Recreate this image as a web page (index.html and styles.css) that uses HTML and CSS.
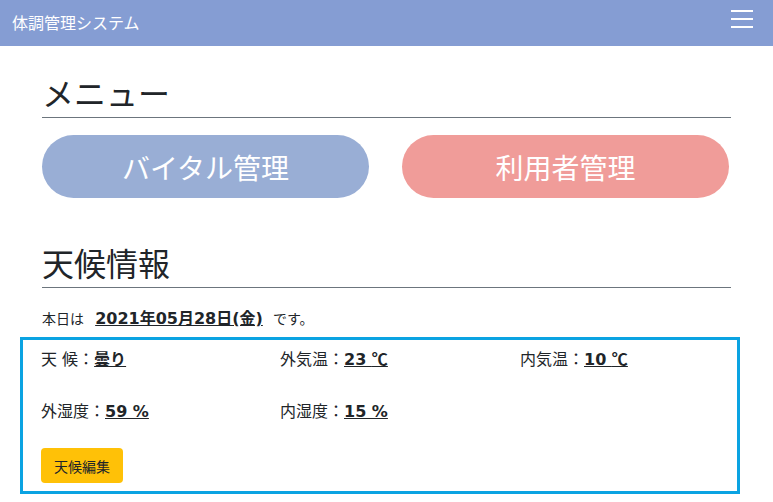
FILE: index.html
```html
<!DOCTYPE html>
<html lang="ja">
<head>
<meta charset="utf-8">
<title>体調管理システム</title>
<link rel="stylesheet" href="styles.css">
</head>
<body>
<header class="topbar">
  <div class="brand">体調管理システム</div>
  <div class="burger" aria-label="menu"><span></span><span></span><span></span></div>
</header>
<main class="page">
  <h2 class="section-title">メニュー</h2>
  <div class="menu-buttons">
    <a class="pill pill-vital">バイタル管理</a>
    <a class="pill pill-user">利用者管理</a>
  </div>
  <h2 class="section-title second">天候情報</h2>
  <p class="today">本日は <span class="date">2021年05月28日(金)</span> です。</p>
</main>
<section class="weather">
  <div class="grid">
    <div class="item">天 候：<span class="val">曇り</span></div>
    <div class="item">外気温：<span class="val">23 <span class="unit">℃</span></span></div>
    <div class="item">内気温：<span class="val">10 <span class="unit">℃</span></span></div>
    <div class="item">外湿度：<span class="val">59 %</span></div>
    <div class="item">内湿度：<span class="val">15 %</span></div>
  </div>
  <button class="edit">天候編集</button>
</section>
</body>
</html>
```
FILE: styles.css
```css
* { box-sizing: border-box; }
html, body { margin: 0; padding: 0; background: #fff; }
body {
  font-family: "DejaVu Sans", "Noto Sans CJK JP", sans-serif;
  color: #212529;
  width: 773px;
}
.topbar {
  height: 46px;
  background: #859dd3;
  display: flex;
  justify-content: space-between;
  align-items: center;
  padding: 0 20px 0 12px;
}
.brand {
  font-family: "Noto Sans CJK JP", sans-serif;
  font-size: 16px;
  color: #fff;
  line-height: 20px;
  margin-top: -2px;
}
.burger {
  width: 22px;
  display: flex;
  flex-direction: column;
  gap: 6px;
  align-self: flex-start;
  margin-top: 10px;
}
.burger span { display: block; height: 2px; background: #fff; }
.page { padding: 0 42px; }
.section-title {
  font-family: "Noto Sans CJK JP", sans-serif;
  font-weight: 400;
  font-size: 32px;
  line-height: 38px;
  margin: 27px 0 0;
  padding-bottom: 6px;
  border-bottom: 1px solid #6c757d;
}
.section-title.second { margin-top: 45px; }
.menu-buttons {
  display: flex;
  gap: 33px;
  margin-top: 17px;
}
.pill {
  width: 327px;
  height: 63px;
  border-radius: 32px;
  display: flex;
  align-items: center;
  justify-content: center;
  color: #fff;
  font-family: "Noto Sans CJK JP", sans-serif;
  font-size: 28px;
}
.pill-vital { background: #99aed5; }
.pill-user { background: #f09c99; }
.today {
  margin: 18px 0 0;
  height: 24px;
  font-size: 14px;
  line-height: 24px;
  font-family: "Noto Sans CJK JP", sans-serif;
}
.today .date {
  font-family: "DejaVu Sans", "Noto Sans CJK JP", sans-serif;
  font-size: 16px;
  line-height: 1;
  font-weight: 700;
  text-decoration: underline;
  margin: 0 7px 0 8px;
}
.weather {
  margin: 7px 0 0 20px;
  width: 720px;
  border: 3px solid #0aa3e2;
  padding: 8px 18px 8px;
}
.grid {
  display: grid;
  grid-template-columns: 239px 240px auto;
  grid-auto-rows: 24px;
  row-gap: 28px;
}
.item {
  font-size: 16px;
  line-height: 24px;
  height: 24px;
}
.val {
  font-weight: 700;
  text-decoration: underline;
}
.unit { font-family: "Noto Sans CJK JP", sans-serif; line-height: 1; }
.edit {
  margin-top: 24px;
  height: 35px;
  padding: 0 13px;
  border: none;
  border-radius: 4px;
  background: #ffc107;
  color: #212529;
  font-family: "Noto Sans CJK JP", sans-serif;
  font-size: 14px;
}
```
